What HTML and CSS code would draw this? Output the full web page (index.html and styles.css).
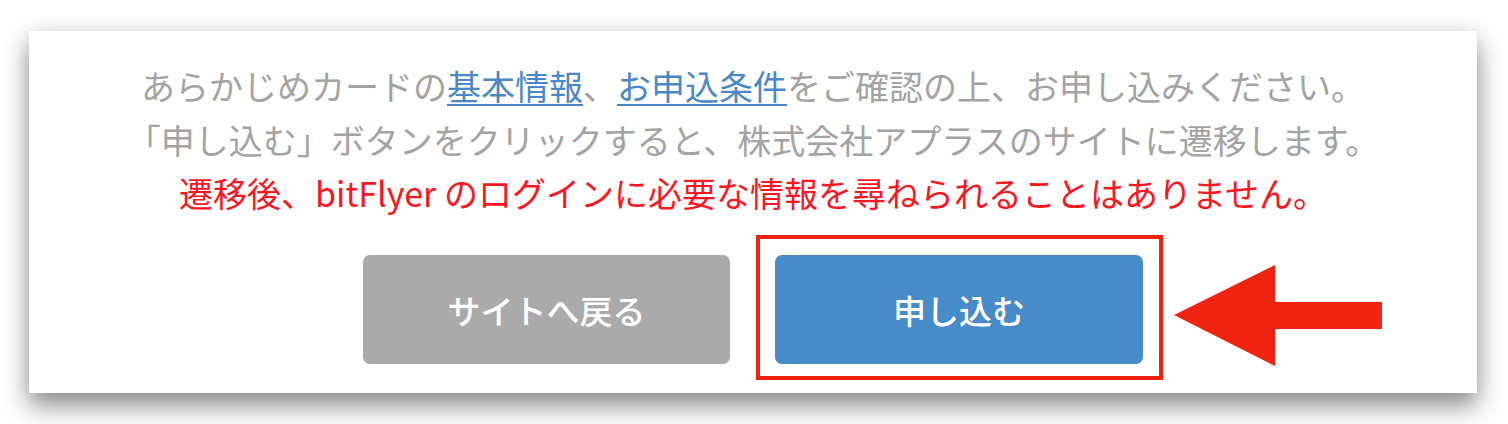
FILE: index.html
```html
<!DOCTYPE html>
<html lang="ja">
<head>
<meta charset="utf-8">
<link rel="stylesheet" href="styles.css">
</head>
<body>
<div class="card">
  <p class="msg">あらかじめカードの<a class="lnk" href="#">基本情報</a>、<a class="lnk" href="#">お申込条件</a>をご確認の上、お申し込みください。</p>
  <p class="msg">「申し込む」ボタンをクリックすると、株式会社アプラスのサイトに遷移します。</p>
  <p class="msg warn">遷移後、bitFlyer のログインに必要な情報を尋ねられることはありません。</p>
  <div class="actions">
    <button class="btn back">サイトへ戻る</button>
    <span class="marked">
      <button class="btn apply">申し込む</button>
    </span>
  </div>
  <svg class="arrow" width="210" height="102" viewBox="0 0 210 102">
    <polygon points="0,50 101,0 101,37 208,37 208,64 101,64 101,101" fill="#f02310"/>
  </svg>
</div>
</body>
</html>
```

FILE: styles.css
```css
html, body {
  margin: 0;
  padding: 0;
  background: #ffffff;
}
html {
  height: 424px;
}
body {
  box-sizing: border-box;
  height: 424px;
  padding: 31px 31px 0 29px;
  font-family: "Noto Sans CJK JP", "Noto Sans", sans-serif;
}
.card {
  position: relative;
  width: 1448px;
  height: 362px;
  box-sizing: border-box;
  background: #fff;
  box-shadow: 0 13px 24px rgba(0, 0, 0, 0.45), 0 -2px 18px rgba(0, 0, 0, 0.06);
  padding-top: 28px;
  text-align: center;
}
.msg {
  margin: 0;
  font-size: 34px;
  line-height: 53.5px;
  color: #a3a3a3;
  white-space: nowrap;
}
.warn {
  color: #fc1622;
}
.lnk {
  color: #4a87c6;
  text-decoration: underline;
  text-underline-offset: 4px;
  text-decoration-thickness: 2px;
}
.actions {
  display: flex;
  justify-content: center;
  gap: 45px;
  margin-top: 35.5px;
}
.btn {
  width: 367px;
  height: 109px;
  border: none;
  border-radius: 7px;
  color: #fff;
  font-family: "Noto Sans CJK JP", "Noto Sans", sans-serif;
  font-size: 33px;
  font-weight: 500;
  padding: 0;
  display: block;
}
.back {
  background: #aaaaaa;
}
.apply {
  background: #478bc9;
  width: 368px;
}
.marked {
  position: relative;
  display: block;
}
.marked::before {
  content: "";
  position: absolute;
  left: -19px;
  top: -20px;
  right: -20px;
  bottom: -16px;
  border: 4px solid #ee2211;
}
.arrow {
  position: absolute;
  left: 1145px;
  top: 234px;
}
```
